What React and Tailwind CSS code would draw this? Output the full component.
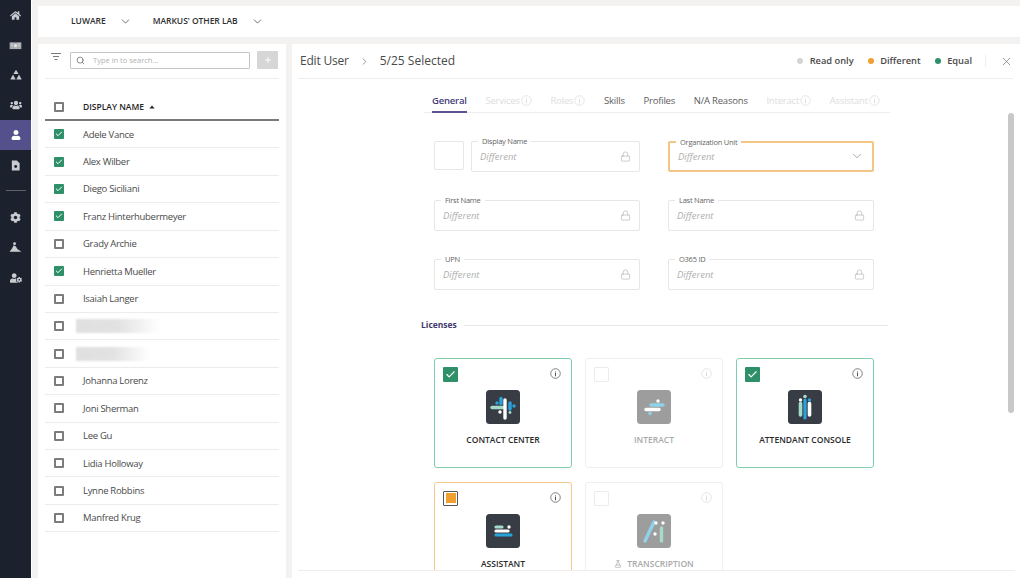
import React from "react";
import { ChevronDown, ChevronRight, Search, Plus, Lock, X, Check, FlaskConical } from "lucide-react";
import { FaHome, FaUser, FaCog, FaUserCog, FaUsers } from "react-icons/fa";

const FONT = "font-['Open_Sans','Noto_Sans',sans-serif]";

function CardsIcon() {
  return (
    <svg viewBox="0 0 14 10" className="w-[13px] h-[9px]">
      <rect x="0.5" y="1.5" width="13" height="7.5" fill="#a9abb1" />
      <circle cx="7" cy="5.2" r="1.8" fill="#e4e5e8" />
      <path d="M2 3.2h2M2 5.2h2M10 3.2h2M10 5.2h2" stroke="#e4e5e8" strokeWidth="0.8" />
    </svg>
  );
}
function Triad() {
  return (
    <svg viewBox="0 0 12 12" className="w-[12px] h-[12px] fill-[#c9cbd0]">
      <path d="M6 0.8L8.6 5H3.4z" />
      <path d="M3 5.6L5.7 10.6H0.3z" />
      <path d="M9 5.6L11.7 10.6H6.3z" />
    </svg>
  );
}
function DocIcon() {
  return (
    <svg viewBox="0 0 12 12" className="w-[11px] h-[11px]">
      <path d="M2 0.5h5.5L10.5 3.5V11.5H2z" fill="#c9cbd0" />
      <circle cx="6.2" cy="7" r="1.6" fill="#1b212d" />
    </svg>
  );
}
function Climb() {
  return (
    <svg viewBox="0 0 14 12" className="w-[13px] h-[11px] fill-[#c9cbd0]">
      <circle cx="6" cy="1.8" r="1.6" />
      <path d="M5 3.6L7.5 5 9 7.5 13.5 10.5H0.5L3.2 7.2z" />
    </svg>
  );
}

const NAV = [
  <FaHome className="w-[11px] h-[11px] text-[#c9cbd0]" />,
  <CardsIcon />,
  <Triad />,
  <FaUsers className="w-[12px] h-[12px] text-[#c9cbd0]" />,
];

function Sidebar() {
  return (
    <aside className="w-[32px] shrink-0 h-full bg-[#1b212d] border-r border-white flex flex-col">
      {NAV.map((n, i) => (
        <div key={i} className="h-[30px] flex items-center justify-center">{n}</div>
      ))}
      <div className="h-[30px] flex items-center justify-center bg-[#54508c]">
        <FaUser className="w-[10px] h-[10px] text-white" />
      </div>
      <div className="h-[30px] flex items-center justify-center"><DocIcon /></div>
      <div className="h-[20px] flex items-center justify-center">
        <div className="w-[20px] h-px bg-[#5b606b]" />
      </div>
      <div className="h-[34px] flex items-center justify-center">
        <FaCog className="w-[11px] h-[11px] text-[#c9cbd0]" />
      </div>
      <div className="h-[27px] flex items-center justify-center"><Climb /></div>
      <div className="h-[33px] flex items-center justify-center">
        <FaUserCog className="w-[12px] h-[12px] text-[#c9cbd0]" />
      </div>
    </aside>
  );
}

function Box({ checked }) {
  if (checked) {
    return (
      <span className="w-[10px] h-[10px] rounded-[1px] bg-[#2e9068] flex items-center justify-center shrink-0">
        <Check className="w-[8px] h-[8px] text-white" strokeWidth={3} />
      </span>
    );
  }
  return <span className="block w-[10px] h-[10px] rounded-[1px] border-2 border-[#7c7c7c] bg-white shrink-0" />;
}

const USERS = [
  ["Adele Vance", 1], ["Alex Wilber", 1], ["Diego Siciliani", 1], ["Franz Hinterhubermeyer", 1],
  ["Grady Archie", 0], ["Henrietta Mueller", 1], ["Isaiah Langer", 0],
  [null, 0, "w-[84px]"], [null, 0, "w-[74px]"],
  ["Johanna Lorenz", 0], ["Joni Sherman", 0], ["Lee Gu", 0], ["Lidia Holloway", 0], ["Lynne Robbins", 0], ["Manfred Krug", 0],
];

function LeftPanel() {
  return (
    <section className="w-[248px] shrink-0 bg-white flex flex-col px-[7px]">
      <div className="h-[35px] border-b border-[#eeeeee] flex items-start pt-[8px]">
        <svg viewBox="0 0 12 10" className="w-[12px] h-[10px] ml-[5px] stroke-[#6b6b6b] fill-none">
          <path d="M1 1.5H11M3 4.5H9M4.5 7.5H7.5" strokeWidth="0.9" />
        </svg>
        <div className="ml-[8px] w-[180px] h-[17px] border border-[#c4c4c4] rounded-[1px] flex items-center">
          <Search className="w-[9px] h-[9px] ml-[5px] text-[#666]" />
          <span className="ml-[8px] text-[7.5px] text-[#b3b3b3]">Type in to search...</span>
        </div>
        <div className="ml-[7px] w-[21px] h-[18px] -mt-px bg-[#d6d6d6] rounded-[1px] flex items-center justify-center">
          <Plus className="w-[8px] h-[8px] text-white" strokeWidth={3} />
        </div>
      </div>
      <div className="h-[42px] flex items-center pt-[16px] border-b-2 border-[#7a7a7a]">
        <span className="ml-[9px]"><Box /></span>
        <span className="ml-[19px] text-[8.5px] font-semibold text-[#252423]">DISPLAY NAME</span>
        <svg viewBox="0 0 8 5" className="w-[6px] h-[4px] ml-[5px] fill-[#252423]"><path d="M4 0.5L7.5 4.5H0.5z" /></svg>
      </div>
      {USERS.map(([name, c, w], i) => (
        <div key={i} className="h-[27.43px] border-b border-[#ececec] flex items-center">
          <span className="ml-[9px]"><Box checked={!!c} /></span>
          {name ? (
            <span className="ml-[19px] pt-[1px] text-[9.5px] tracking-[-0.3px] text-[#4a4a4a] whitespace-nowrap">{name}</span>
          ) : (
            <span className={`ml-[12px] h-[14px] ${w} bg-gradient-to-r from-[#e0e0e0] via-[#e2e2e2] to-white blur-[1px]`} />
          )}
        </div>
      ))}
    </section>
  );
}

function Info({ muted }) {
  return (
    <svg viewBox="0 0 12 12" className={`w-[11px] h-[11px] fill-none ${muted ? "stroke-[#dcdcdc]" : "stroke-[#555]"}`}>
      <circle cx="6" cy="6" r="5.2" strokeWidth="0.8" />
      <path d="M6 3.2V3.9M6 5V9" strokeWidth="1.1" />
    </svg>
  );
}

const TABS = [
  ["General", "a"], ["Services", "d"], ["Roles", "d"], ["Skills", "n"], ["Profiles", "n"],
  ["N/A Reasons", "n"], ["Interact", "d"], ["Assistant", "d"],
];

function Tabs() {
  return (
    <div className="ml-[132px] w-[466px] h-[34px] border-b border-[#eeeeee] pl-[8px] flex gap-[18.7px] items-start">
      {TABS.map(([t, k]) => (
        <div
          key={t}
          className={`h-[34px] pt-[15px] flex items-start gap-[1px] text-[9.5px] tracking-[-0.2px] leading-[13px] whitespace-nowrap ${
            k === "a" ? "font-semibold text-[#45407a] border-b-2 border-[#5a5590]" : k === "d" ? "text-[#dddddd]" : "text-[#5c5c5c]"
          }`}
        >
          {t}
          {k === "d" && <span className="mt-[1px]"><Info muted /></span>}
        </div>
      ))}
    </div>
  );
}

function Field({ label, w, select }) {
  return (
    <div className={`relative h-[30.5px] ${w} rounded-[2px] flex items-center justify-between pl-[8px] pr-[8px] ${select ? "border-2 border-[#f4c685]" : "border border-[#e6e6e6]"}`}>
      <span className="absolute -top-[6px] left-[6px] bg-white px-[4px] text-[7.5px] tracking-[-0.25px] leading-[10px] text-[#666]">{label}</span>
      <span className="italic text-[9.5px] pt-[2px] text-[#b0b0b0]">Different</span>
      {select ? (
        <ChevronDown className="w-[14px] h-[14px] text-[#666]" strokeWidth={1} />
      ) : (
        <Lock className="w-[11px] h-[11px] mt-[1px] text-[#a6a6a6]" strokeWidth={1.2} />
      )}
    </div>
  );
}

function Form() {
  return (
    <div className="ml-[142px] mt-[28px] w-[440px] flex flex-col gap-[28.5px]">
      <div className="flex gap-[28px]">
        <div className="w-[206px] flex gap-[7px]">
          <div className="w-[30px] h-[29px] border border-[#e6e6e6] rounded-[2px]" />
          <Field label="Display Name" w="w-[169px]" />
        </div>
        <Field label="Organization Unit" w="w-[206px]" select />
      </div>
      <div className="flex gap-[28px]">
        <Field label="First Name" w="w-[206px]" />
        <Field label="Last Name" w="w-[206px]" />
      </div>
      <div className="flex gap-[28px]">
        <Field label="UPN" w="w-[206px]" />
        <Field label="O365 ID" w="w-[206px]" />
      </div>
    </div>
  );
}

const LogoBox = ({ muted, children }) => (
  <svg viewBox="0 0 34 34" className="w-[34px] h-[34px] block">
    <rect width="34" height="34" rx="3.5" fill={muted ? "#9d9d9d" : "#383c45"} />
    <g strokeLinecap="round" fill="none">{children}</g>
  </svg>
);

const BLUE = "#2aa3dc";
const LBLUE = "#8fd3ea";
const GREEN = "#a5dcc9";

const LOGOS = {
  contact: (
    <LogoBox>
      <path d="M6 17.5H17" stroke={GREEN} strokeWidth="3.4" />
      <path d="M19 10V28" stroke="#fff" strokeWidth="3.4" />
      <path d="M15 8.5V13.5" stroke={BLUE} strokeWidth="3.4" />
      <circle cx="11" cy="13" r="1.7" fill={BLUE} />
      <path d="M24 13V19" stroke={BLUE} strokeWidth="3.4" />
      <circle cx="28" cy="16" r="1.7" fill={BLUE} />
      <circle cx="14" cy="22" r="1.7" fill="#fff" />
      <circle cx="24" cy="22.5" r="1.4" fill={GREEN} />
    </LogoBox>
  ),
  interact: (
    <LogoBox muted>
      <path d="M14 15H26" stroke={LBLUE} strokeWidth="3.4" />
      <path d="M9 19.5H22" stroke="#fff" strokeWidth="3.4" />
      <circle cx="21" cy="11" r="1.7" fill="#fff" />
      <circle cx="13" cy="23.5" r="1.7" fill={LBLUE} />
    </LogoBox>
  ),
  attendant: (
    <LogoBox>
      <path d="M17 10V28" stroke={BLUE} strokeWidth="3.2" />
      <circle cx="17" cy="6.5" r="1.8" fill={GREEN} />
      <circle cx="12.5" cy="10" r="1.7" fill="#fff" />
      <path d="M12.5 13.5V25" stroke={GREEN} strokeWidth="3.6" />
      <circle cx="21.5" cy="10" r="1.7" fill={BLUE} />
      <path d="M21.5 13.5V25" stroke="#fff" strokeWidth="3.6" />
    </LogoBox>
  ),
  assistant: (
    <LogoBox>
      <path d="M10 13H16" stroke={GREEN} strokeWidth="3.2" />
      <circle cx="23" cy="13" r="1.7" fill="#fff" />
      <path d="M10 17H22" stroke="#fff" strokeWidth="3.2" />
      <path d="M10 21H25" stroke={BLUE} strokeWidth="3.2" />
    </LogoBox>
  ),
  transcription: (
    <LogoBox muted>
      <path d="M8 27L17 8" stroke={LBLUE} strokeWidth="3.4" />
      <circle cx="19" cy="9" r="1.7" fill="#fff" />
      <circle cx="26" cy="9" r="1.7" fill="#fff" />
      <circle cx="18" cy="20" r="1.7" fill="#fff" />
      <path d="M24.5 14V27" stroke={GREEN} strokeWidth="3.4" />
    </LogoBox>
  ),
};

function Card({ state, title, logo, flask }) {
  const border = state === "on" ? "border-[#7fcfac]" : state === "mix" ? "border-[#f4c98b]" : "border-[#efefef]";
  const muted = state === "off";
  return (
    <div className={`relative h-[110px] rounded-[3px] border ${border} bg-white flex flex-col items-center pt-[31px]`}>
      <span className="absolute left-[8px] top-[8px]">
        {state === "on" && (
          <span className="w-[15px] h-[15px] rounded-[1px] bg-[#2e9068] flex items-center justify-center">
            <Check className="w-[11px] h-[11px] text-white" strokeWidth={2.5} />
          </span>
        )}
        {state === "mix" && (
          <span className="w-[15px] h-[15px] rounded-[1px] border border-[#555] bg-white flex items-center justify-center">
            <span className="w-[10px] h-[10px] bg-[#f0a030]" />
          </span>
        )}
        {state === "off" && <span className="block w-[15px] h-[15px] rounded-[1px] border border-[#ececec] bg-white" />}
      </span>
      <span className="absolute right-[10px] top-[9px]"><Info muted={muted} /></span>
      {logo}
      <span className={`mt-[10px] text-[8.5px] leading-[12px] font-semibold whitespace-nowrap flex items-center ${muted ? "text-[#a9a9a9]" : "text-[#2a2a2a]"}`}>
        {flask && <FlaskConical className="w-[8px] h-[8px] mr-[5px] text-[#a9a9a9]" />}
        {title}
      </span>
    </div>
  );
}

function Licenses() {
  return (
    <div className="ml-[129px] mt-[29px] w-[467px]">
      <div className="h-[14px] flex items-center gap-[7px]">
        <span className="text-[8.5px] font-bold text-[#3f3a6e]">Licenses</span>
        <div className="flex-1 h-px bg-[#e6e6e6]" />
      </div>
      <div className="ml-[13px] mt-[25px] grid grid-cols-[138px_138px_138px] gap-x-[13px] gap-y-[14px]">
        <Card state="on" title="CONTACT CENTER" logo={LOGOS.contact} />
        <Card state="off" title="INTERACT" logo={LOGOS.interact} />
        <Card state="on" title="ATTENDANT CONSOLE" logo={LOGOS.attendant} />
        <Card state="mix" title="ASSISTANT" logo={LOGOS.assistant} />
        <Card state="off" title="TRANSCRIPTION" logo={LOGOS.transcription} flask />
      </div>
    </div>
  );
}

function Legend({ color, label }) {
  return (
    <div className="flex items-center gap-[6.5px]">
      <span className={`w-[6px] h-[6px] rounded-full ${color}`} />
      <span className="text-[9.3px] font-semibold text-[#4a4a4a]">{label}</span>
    </div>
  );
}

function RightPanel() {
  return (
    <section className="relative flex-1 bg-white flex flex-col min-w-0">
      <header className="h-[35px] shrink-0 ml-[6px] mr-[7px] border-b border-[#eeeeee] flex items-center pl-[2px]">
        <span className="text-[12px] tracking-[-0.2px] text-[#4a4a4a]">Edit User</span>
        <ChevronRight className="w-[11px] h-[11px] mx-[10px] text-[#555]" strokeWidth={1.3} />
        <span className="text-[12px] text-[#4a4a4a]">5/25 Selected</span>
        <div className="ml-auto flex items-center gap-[14px]">
          <Legend color="bg-[#d4d4d4]" label="Read only" />
          <Legend color="bg-[#f0a030]" label="Different" />
          <Legend color="bg-[#2e9068]" label="Equal" />
        </div>
        <div className="ml-[13px] w-px h-[12px] bg-[#eeeeee]" />
        <X className="ml-[14px] mr-0 w-[13px] h-[13px] text-[#666]" strokeWidth={1.2} />
      </header>
      <div className="h-[491px] overflow-hidden shrink-0">
        <Tabs />
        <Form />
        <Licenses />
      </div>
      <div className="ml-[6px] mr-[5px] border-t border-[#eeeeee]" />
      <div className="absolute left-[716px] top-[69px] w-[6px] h-[300px] rounded-[3px] bg-[#c8c8c8]" />
    </section>
  );
}

export default function App() {
  return (
    <div className={`w-[1020px] h-[578px] overflow-hidden flex bg-[#f3f2f1] ${FONT}`}>
      <Sidebar />
      <main className="flex-1 min-w-0 pl-[6px] pt-[6px] flex flex-col">
        <div className="h-[31px] shrink-0 bg-white flex items-center pl-[33px] text-[8.5px] font-semibold text-[#2f2f2f]">
          <span>LUWARE</span>
          <ChevronDown className="ml-[13px] w-[13px] h-[13px] text-[#444]" strokeWidth={1.4} />
          <span className="ml-[21px] tracking-[-0.05px]">MARKUS' OTHER LAB</span>
          <ChevronDown className="ml-[13px] w-[13px] h-[13px] text-[#444]" strokeWidth={1.4} />
        </div>
        <div className="mt-[7px] flex-1 min-h-0 flex gap-[6px]">
          <LeftPanel />
          <RightPanel />
        </div>
      </main>
    </div>
  );
}
